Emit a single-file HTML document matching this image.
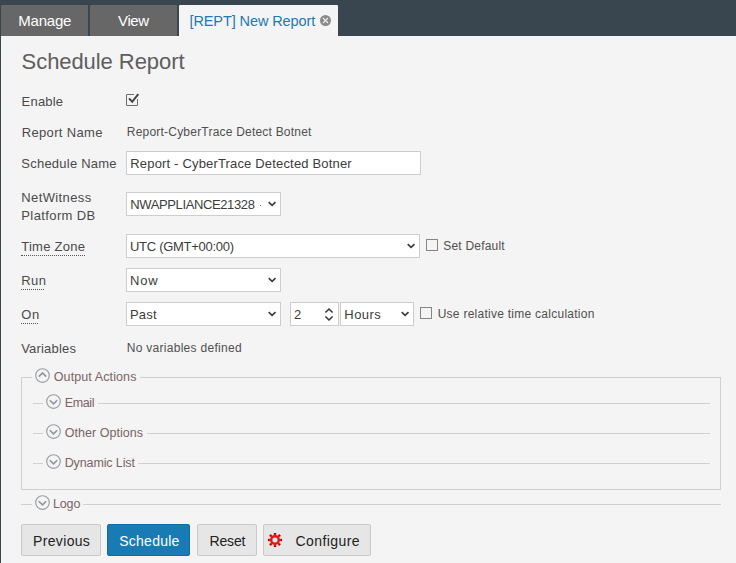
<!DOCTYPE html>
<html><head><meta charset="utf-8">
<style>
*{box-sizing:border-box;margin:0;padding:0}
html,body{width:736px;height:563px;overflow:hidden;background:#f4f4f4;font-family:"Liberation Sans",sans-serif;color:#444;position:relative}
.t{position:absolute;white-space:pre;line-height:normal}
.tab{position:absolute;top:5px;height:31px;background:#676767;border-radius:1px 1px 0 0}
.bx{position:absolute;background:#fff;border:1px solid #cdcdcd}
.hl{position:absolute;height:1px;background:#d0d0d0}
.cb{position:absolute;width:12px;height:12px;border:1px solid #858585}
.btn{position:absolute;top:524px;height:32px;border:1px solid #c9c9c9;background:#e6e6e6;border-radius:2px}
.dot{position:absolute;height:1px;border-top:1px dotted #555}
</style></head><body>
<div style="position:absolute;left:0;top:0;width:736px;height:36px;background:#39464f"></div>
<div style="position:absolute;left:0;top:0;width:1px;height:563px;background:#39464f"></div>
<div class="tab" style="left:1px;width:87px"></div>
<div class="tab" style="left:90px;width:87px"></div>
<div class="tab" style="left:179px;width:159px;background:#f4f4f4"></div>
<div class="t" style="left:18.25px;top:12.43px;font-size:15px;letter-spacing:-0.200px;color:#fff">Manage</div>
<div class="t" style="left:118.10px;top:11.98px;font-size:15px;letter-spacing:-0.400px;color:#fff">View</div>
<div class="t" style="left:189.50px;top:12.95px;font-size:14.5px;letter-spacing:-0.100px;color:#2279b4">[REPT] New Report</div>
<svg class="t" style="left:319.9px;top:14.7px" width="11" height="11" viewBox="0 0 11 11"><circle cx="5.5" cy="5.5" r="5.5" fill="#8a8a8a"/><path d="M3 3L8 8M8 3L3 8" stroke="#eee" stroke-width="1.1"/></svg>
<div class="t" style="left:21.60px;top:48.94px;font-size:22px;letter-spacing:-0.070px;color:#5e5e5e">Schedule Report</div>
<div class="t" style="left:21.60px;top:93.83px;font-size:13px;letter-spacing:0.200px;color:#4a4a4a">Enable</div>
<svg class="t" style="left:126px;top:93px" width="14" height="14" viewBox="0 0 14 14"><path d="M8 1.5H0.5V12.5H11.5V6" fill="none" stroke="#6e6e6e" stroke-width="1"/><path d="M3 5.4L6.2 8.8L12.3 1.2" fill="none" stroke="#444" stroke-width="2"/></svg>
<div class="t" style="left:21.70px;top:124.93px;font-size:13px;letter-spacing:0.340px;color:#4a4a4a">Report Name</div>
<div class="t" style="left:126.80px;top:124.65px;font-size:12px;letter-spacing:0.210px;color:#505050">Report-CyberTrace Detect Botnet</div>
<div class="t" style="left:21.30px;top:156.23px;font-size:13px;letter-spacing:0.230px;color:#4a4a4a">Schedule Name</div>
<div class="bx" style="left:126px;top:151px;width:295px;height:24px;"></div>
<div class="t" style="left:130.30px;top:155.93px;font-size:13px;letter-spacing:0.170px;color:#3c3c3c">Report - CyberTrace Detected Botner</div>
<div class="t" style="left:21.30px;top:190.03px;font-size:13px;letter-spacing:0.380px;color:#4a4a4a">NetWitness</div>
<div class="t" style="left:21.30px;top:208.03px;font-size:13px;letter-spacing:0.390px;color:#4a4a4a">Platform DB</div>
<div class="bx" style="left:126px;top:192px;width:155px;height:24px;"></div>
<div class="t" style="left:130.30px;top:196.73px;font-size:13px;letter-spacing:-0.380px;color:#3c3c3c">NWAPPLIANCE21328</div>
<div class="t" style="left:259.8px;top:205px;width:1.3px;height:1.3px;background:#777"></div>
<svg class="t" style="left:267px;top:200px" width="11" height="8" viewBox="0 0 11 8"><path d="M1.7 2.2L5.1 5.3L8.5 2.2" fill="none" stroke="#383838" stroke-width="1.6"/></svg>
<div class="t" style="left:21.20px;top:238.93px;font-size:13px;letter-spacing:0.260px;color:#4a4a4a">Time Zone</div>
<div class="dot" style="left:21px;top:255px;width:64px"></div>
<div class="bx" style="left:126px;top:234px;width:294px;height:24px;"></div>
<div class="t" style="left:129.90px;top:239.33px;font-size:13px;letter-spacing:-0.270px;color:#3c3c3c">UTC (GMT+00:00)</div>
<svg class="t" style="left:406px;top:242px" width="11" height="8" viewBox="0 0 11 8"><path d="M1.7 2.2L5.1 5.3L8.5 2.2" fill="none" stroke="#383838" stroke-width="1.6"/></svg>
<div class="cb" style="left:426px;top:239px"></div>
<div class="t" style="left:443.30px;top:238.85px;font-size:12px;letter-spacing:0.200px;color:#505050">Set Default</div>
<div class="t" style="left:21.20px;top:273.13px;font-size:13px;letter-spacing:0.500px;color:#4a4a4a">Run</div>
<div class="dot" style="left:21px;top:289px;width:23px"></div>
<div class="bx" style="left:126px;top:268px;width:155px;height:24px;"></div>
<div class="t" style="left:129.90px;top:273.03px;font-size:13px;letter-spacing:0.900px;color:#3c3c3c">Now</div>
<svg class="t" style="left:267px;top:276px" width="11" height="8" viewBox="0 0 11 8"><path d="M1.7 2.2L5.1 5.3L8.5 2.2" fill="none" stroke="#383838" stroke-width="1.6"/></svg>
<div class="t" style="left:21.20px;top:307.13px;font-size:13px;letter-spacing:0.700px;color:#4a4a4a">On</div>
<div class="dot" style="left:21px;top:323px;width:17px"></div>
<div class="bx" style="left:126px;top:302px;width:155px;height:24px;"></div>
<div class="t" style="left:129.90px;top:306.93px;font-size:13px;letter-spacing:0.230px;color:#3c3c3c">Past</div>
<svg class="t" style="left:267px;top:310px" width="11" height="8" viewBox="0 0 11 8"><path d="M1.7 2.2L5.1 5.3L8.5 2.2" fill="none" stroke="#383838" stroke-width="1.6"/></svg>
<div class="bx" style="left:290px;top:302px;width:49px;height:24px;"></div>
<div class="t" style="left:294.10px;top:306.93px;font-size:13px;color:#3c3c3c">2</div>
<svg class="t" style="left:323px;top:306px" width="12" height="17" viewBox="0 0 12 17"><path d="M2.4 6.5L6 3.0L9.6 6.5M2.4 10.5L6 14.0L9.6 10.5" fill="none" stroke="#383838" stroke-width="1.6"/></svg>
<div class="bx" style="left:340px;top:302px;width:74px;height:24px;"></div>
<div class="t" style="left:344.30px;top:306.93px;font-size:13px;letter-spacing:0.450px;color:#3c3c3c">Hours</div>
<svg class="t" style="left:400px;top:310px" width="11" height="8" viewBox="0 0 11 8"><path d="M1.7 2.2L5.1 5.3L8.5 2.2" fill="none" stroke="#383838" stroke-width="1.6"/></svg>
<div class="cb" style="left:420px;top:307px"></div>
<div class="t" style="left:437.70px;top:307.05px;font-size:12px;letter-spacing:0.260px;color:#505050">Use relative time calculation</div>
<div class="t" style="left:21.20px;top:340.93px;font-size:13px;letter-spacing:0.190px;color:#4a4a4a">Variables</div>
<div class="t" style="left:126.70px;top:340.95px;font-size:12px;letter-spacing:0.290px;color:#505050">No variables defined</div>
<div style="position:absolute;left:21px;top:377px;width:700px;height:113px;border:1px solid #d0d0d0;border-top:none"></div>
<div class="hl" style="left:21px;top:377px;width:11px"></div>
<div class="hl" style="left:140px;top:377px;width:581px"></div>
<svg class="t" style="left:34.95px;top:367.90px" width="15" height="15" viewBox="0 0 15 15"><circle cx="7.5" cy="7.5" r="6.8" fill="none" stroke="#979ea5" stroke-width="1.15"/><path d="M3.8 8.6L7.5 4.9L11.2 8.6" fill="none" stroke="#8e959c" stroke-width="1.6"/></svg>
<div class="t" style="left:53.80px;top:369.79px;font-size:12.5px;letter-spacing:0.100px;color:#7a6464">Output Actions</div>
<div class="hl" style="left:33px;top:403px;width:10px"></div>
<svg class="t" style="left:45.95px;top:393.90px" width="15" height="15" viewBox="0 0 15 15"><circle cx="7.5" cy="7.5" r="6.8" fill="none" stroke="#979ea5" stroke-width="1.15"/><path d="M3.8 6.2L7.5 9.9L11.2 6.2" fill="none" stroke="#8e959c" stroke-width="1.6"/></svg>
<div class="t" style="left:64.70px;top:395.79px;font-size:12.5px;letter-spacing:-0.350px;color:#7a6464">Email</div>
<div class="hl" style="left:98px;top:403px;width:612px"></div>
<div class="hl" style="left:33px;top:433px;width:10px"></div>
<svg class="t" style="left:45.95px;top:423.90px" width="15" height="15" viewBox="0 0 15 15"><circle cx="7.5" cy="7.5" r="6.8" fill="none" stroke="#979ea5" stroke-width="1.15"/><path d="M3.8 6.2L7.5 9.9L11.2 6.2" fill="none" stroke="#8e959c" stroke-width="1.6"/></svg>
<div class="t" style="left:64.70px;top:425.79px;font-size:12.5px;letter-spacing:0.050px;color:#7a6464">Other Options</div>
<div class="hl" style="left:147px;top:433px;width:563px"></div>
<div class="hl" style="left:33px;top:463px;width:10px"></div>
<svg class="t" style="left:45.95px;top:453.85px" width="15" height="15" viewBox="0 0 15 15"><circle cx="7.5" cy="7.5" r="6.8" fill="none" stroke="#979ea5" stroke-width="1.15"/><path d="M3.8 6.2L7.5 9.9L11.2 6.2" fill="none" stroke="#8e959c" stroke-width="1.6"/></svg>
<div class="t" style="left:64.70px;top:455.79px;font-size:12.5px;letter-spacing:-0.120px;color:#7a6464">Dynamic List</div>
<div class="hl" style="left:138px;top:463px;width:572px"></div>
<div class="hl" style="left:21px;top:504px;width:11px"></div>
<svg class="t" style="left:34.80px;top:494.75px" width="15" height="15" viewBox="0 0 15 15"><circle cx="7.5" cy="7.5" r="6.8" fill="none" stroke="#979ea5" stroke-width="1.15"/><path d="M3.8 6.2L7.5 9.9L11.2 6.2" fill="none" stroke="#8e959c" stroke-width="1.6"/></svg>
<div class="t" style="left:52.90px;top:496.69px;font-size:12.5px;letter-spacing:-0.100px;color:#7a6464">Logo</div>
<div class="hl" style="left:83px;top:504px;width:638px"></div>
<div class="btn" style="left:21px;width:80px"></div>
<div class="btn" style="left:107px;width:83px;background:#197bb3;border-color:#156a9e"></div>
<div class="btn" style="left:197px;width:60px"></div>
<div class="btn" style="left:263px;width:108px"></div>
<div class="t" style="left:33.10px;top:532.71px;font-size:14px;letter-spacing:0.330px;color:#222">Previous</div>
<div class="t" style="left:119.30px;top:532.71px;font-size:14px;letter-spacing:0.230px;color:#fff">Schedule</div>
<div class="t" style="left:209.60px;top:532.71px;font-size:14px;letter-spacing:-0.200px;color:#222">Reset</div>
<div class="t" style="left:295.60px;top:532.71px;font-size:14px;letter-spacing:0.410px;color:#222">Configure</div>
<svg class="t" style="left:267px;top:532px" width="16" height="16" viewBox="-8 -8 16 16"><g fill="#f01414"><rect x="-1.15" y="-7" width="2.3" height="3" transform="rotate(0)"/><rect x="-1.15" y="-7" width="2.3" height="3" transform="rotate(45)"/><rect x="-1.15" y="-7" width="2.3" height="3" transform="rotate(90)"/><rect x="-1.15" y="-7" width="2.3" height="3" transform="rotate(135)"/><rect x="-1.15" y="-7" width="2.3" height="3" transform="rotate(180)"/><rect x="-1.15" y="-7" width="2.3" height="3" transform="rotate(225)"/><rect x="-1.15" y="-7" width="2.3" height="3" transform="rotate(270)"/><rect x="-1.15" y="-7" width="2.3" height="3" transform="rotate(315)"/></g><g fill="#5a0000" opacity="0.7"><rect x="-1.15" y="-7" width="2.3" height="0.9" transform="rotate(0)"/><rect x="-1.15" y="-7" width="2.3" height="0.9" transform="rotate(45)"/><rect x="-1.15" y="-7" width="2.3" height="0.9" transform="rotate(90)"/><rect x="-1.15" y="-7" width="2.3" height="0.9" transform="rotate(135)"/><rect x="-1.15" y="-7" width="2.3" height="0.9" transform="rotate(180)"/><rect x="-1.15" y="-7" width="2.3" height="0.9" transform="rotate(225)"/><rect x="-1.15" y="-7" width="2.3" height="0.9" transform="rotate(270)"/><rect x="-1.15" y="-7" width="2.3" height="0.9" transform="rotate(315)"/></g><circle cx="0" cy="0" r="3.9" fill="none" stroke="#f01414" stroke-width="2.2"/><circle cx="0" cy="0" r="2.8" fill="none" stroke="#600" stroke-width="0.5" opacity="0.6"/></svg>
</body></html>
